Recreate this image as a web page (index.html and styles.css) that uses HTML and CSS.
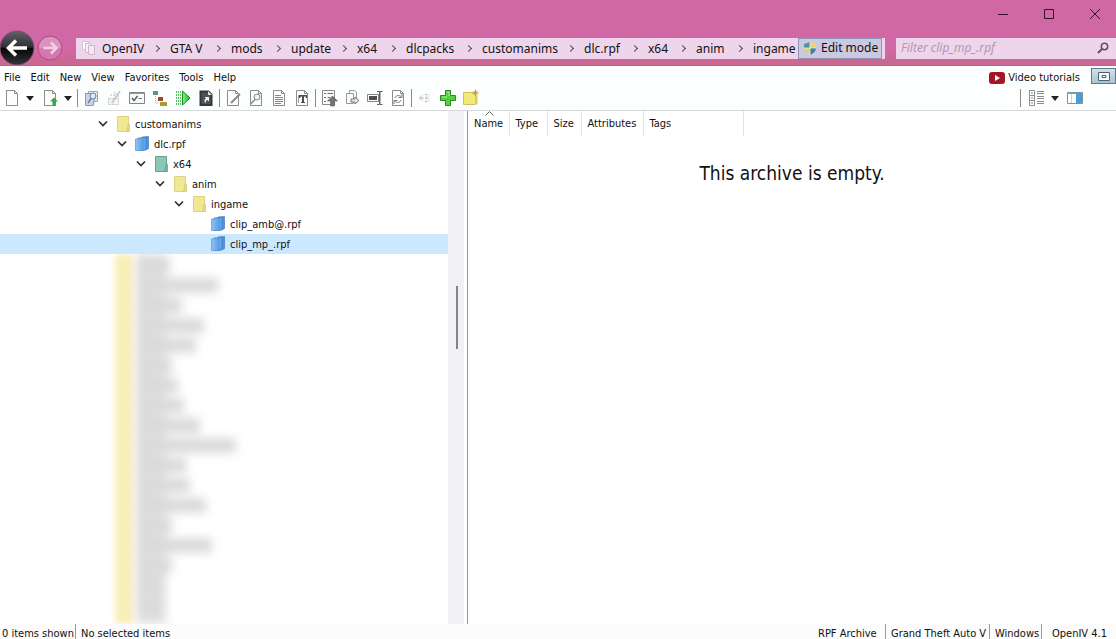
FILE: index.html
```html
<!DOCTYPE html>
<html lang="en">
<head>
<meta charset="utf-8">
<title>OpenIV</title>
<link rel="stylesheet" href="styles.css">
</head>
<body>
<svg class="defs" aria-hidden="true">
  <defs>
    <linearGradient id="gBlue" x1="0" x2="1"><stop offset="0" stop-color="#8cc4f6"/><stop offset="1" stop-color="#5a9fe8"/></linearGradient>
    <linearGradient id="gGreen" x1="0" x2="1"><stop offset="0" stop-color="#8bf08b"/><stop offset="1" stop-color="#14b428"/></linearGradient>
    <linearGradient id="gBall" x1="0" x2="0" y1="0" y2="1"><stop offset="0" stop-color="#62626a"/><stop offset=".48" stop-color="#2e2e33"/><stop offset=".5" stop-color="#050507"/><stop offset="1" stop-color="#35353a"/></linearGradient>
  </defs>
  <symbol id="page" viewBox="0 0 18 18"><path d="M3.5 1.5h8l3 3v12h-11z" fill="#fdfdfd" stroke="#8c8c8c"/><path d="M11.5 1.5v3h3" fill="none" stroke="#8c8c8c"/></symbol>
  <symbol id="caret" viewBox="0 0 8 5"><path d="M0 0h8L4 5z" fill="#222"/></symbol>
  <symbol id="folder" viewBox="0 0 16 18"><path d="M2.500 1.500h11v15h-11z" fill="#f1e893" stroke="#ddd089"/><path d="M13.500 8l1 2v6.500h-3z" fill="#e6da7c" stroke="#d3c677" stroke-width=".7"/></symbol>
  <symbol id="folder-green" viewBox="0 0 16 18"><path d="M2.500 1.500h11v15h-11z" fill="#8ac7b4" stroke="#68a292"/><path d="M13.500 8l1 2v6.500h-3z" fill="#79b7a5" stroke="#5d9787" stroke-width=".7"/></symbol>
  <symbol id="archive" viewBox="0 0 16 18"><path d="M8 2l6.500-.5v12L12 15H6z" fill="#4e93e0" stroke="#3370b8" stroke-width=".6"/><path d="M4 3l8-.5v11.500l-2 1.500H4z" fill="#62a6ee" stroke="#3977bf" stroke-width=".6"/><path d="M1.500 4l7.500-.8V15.500H1.500z" fill="url(#gBlue)" stroke="#5d94cf" stroke-width=".7"/></symbol>
  <symbol id="chev" viewBox="0 0 10 8"><path d="M1 1.500l4 4 4-4" fill="none" stroke="#303030" stroke-width="1.700"/></symbol>
</svg>
<div class="app">
  <header class="top">
    <div class="window-buttons">
      <button aria-label="Minimize"><svg width="12" height="12"><path d="M1 6.500h10" stroke="#3a1028"/></svg></button>
      <button aria-label="Maximize"><svg width="12" height="12"><path d="M1.500 1.500h9v9h-9z" fill="none" stroke="#3a1028"/></svg></button>
      <button aria-label="Close"><svg width="12" height="12"><path d="M1 1l10 10M11 1L1 11" stroke="#3a1028"/></svg></button>
    </div>
    <div class="nav">
      <button class="back" aria-label="Back"><svg width="36" height="36" viewBox="0 0 36 36"><circle cx="17" cy="18" r="17" fill="url(#gBall)" stroke="#8d4c74"/><path d="M27 18H9M16 10.500L8.500 18l7.500 7.500" fill="none" stroke="#fff" stroke-width="3.500"/></svg></button>
      <button class="forward" aria-label="Forward"><svg width="26" height="26" viewBox="0 0 26 26"><circle cx="13" cy="13" r="12" fill="#d578b0" stroke="#a94f82"/><path d="M2 13a11 11 0 0 1 22 0z" fill="#dd93bf"/><path d="M6.500 13h12M14 7.500l5.500 5.500-5.500 5.500" fill="none" stroke="#f3cfe4" stroke-width="2.500"/></svg></button>
      <nav class="address" aria-label="Path">
        <svg class="address-icon" width="16" height="16"><path d="M1.500 1.500h6v8h-6z" fill="#fff" stroke="#d9c3d8"/><path d="M4.500 3.500h5v9h-5z" fill="#f8f0f8" stroke="#d0bad0"/><path d="M7.500 5.500h6v9h-6z" fill="#f4e6f4" stroke="#cdb5cc"/></svg>
        <ol class="crumbs">
          <li><a href="#">OpenIV</a></li><li><a href="#">GTA V</a></li><li><a href="#">mods</a></li><li><a href="#">update</a></li><li><a href="#">x64</a></li><li><a href="#">dlcpacks</a></li><li><a href="#">customanims</a></li><li><a href="#">dlc.rpf</a></li><li><a href="#">x64</a></li><li><a href="#">anim</a></li><li><a href="#">ingame</a></li>
        </ol>
        <button class="edit-mode"><svg width="14" height="15" viewBox="0 0 14 15"><path d="M7 1l6 2v4H7z" fill="#e8d66a"/><path d="M7 1L1 3v4h6z" fill="#4f93b4"/><path d="M1 7h6v7C3 12 1 10 1 7z" fill="#ddd07a"/><path d="M13 7H7v7c4-2 6-4 6-7z" fill="#3f7fa6"/><path d="M7 1v13M1 7h12" stroke="#e9efe0" stroke-width=".8"/></svg>Edit mode</button>
      </nav>
      <div class="filter">
        <input type="text" aria-label="Filter" placeholder="Filter clip_mp_.rpf">
        <svg width="12" height="12"><circle cx="7.500" cy="4.500" r="3.200" fill="none" stroke="#6d4a66" stroke-width="1.500"/><path d="M5 7L1 11" stroke="#6d4a66" stroke-width="2"/></svg>
      </div>
    </div>
  </header>
  <div class="menubar">
    <nav class="menus"><button>File</button><button>Edit</button><button>New</button><button>View</button><button>Favorites</button><button>Tools</button><button>Help</button></nav>
    <a class="video" href="#"><svg width="16" height="12"><rect width="16" height="12" rx="3" fill="#a51624"/><path d="M6 3l5 3-5 3z" fill="#fff"/></svg>Video tutorials</a>
    <button class="mode-toggle" aria-label="Toggle window"><svg width="12" height="9"><path d="M.5.5h11v8H.500z" fill="#f5fafc" stroke="#4c6472"/><path d="M4 3.500h4v2H4z" fill="none" stroke="#4c6472"/></svg></button>
  </div>
  <div class="toolbar">
    <button aria-label="New"><svg width="18" height="18"><use href="#page"/></svg></button>
    <button class="drop" aria-label="New options"><svg width="8" height="5"><use href="#caret"/></svg></button>
    <button class="spaced" aria-label="Open"><svg width="18" height="18"><use href="#page"/><path d="M13 8.500l4 4h-2.500V17h-3v-4.500H9z" fill="#3aa548"/></svg></button>
    <button class="drop" aria-label="Open options"><svg width="8" height="5"><use href="#caret"/></svg></button>
    <i class="sep"></i>
    <button aria-label="View"><svg width="18" height="18"><path d="M6.500 2.500h9v10h-9z" fill="#e4eaf4" stroke="#9aa6b8"/><path d="M3.500 4.500h9l-1 12h-8z" fill="#c9d4e6" stroke="#8b98ae"/><circle cx="11" cy="7" r="3" fill="#dfe9f5" stroke="#6f80a0"/><path d="M9 9.500L6 14" stroke="#6f80a0" stroke-width="1.500"/></svg></button>
    <button aria-label="Edit" disabled><svg width="18" height="18"><path d="M3.500 9.500h10v6h-10zM5 6h6M9 3l5 4-7 5" fill="#f4f4f4" stroke="#c2c2c2" stroke-dasharray="2 1"/><path d="M15 2L7 14" stroke="#c4c4c4" stroke-width="1.500"/></svg></button>
    <button aria-label="Properties"><svg width="18" height="18"><path d="M1.500 3.500h15v11h-15z" fill="#fafafa" stroke="#7e8489"/><path d="M2 4.500h14" stroke="#90989c"/><path d="M4 9l2 2.500L9.500 7" fill="none" stroke="#4a6660" stroke-width="1.500"/><path d="M10.500 9.500H14" stroke="#777"/></svg></button>
    <button aria-label="Tree"><svg width="18" height="18"><path d="M2 2h5v4H2z" fill="#5b9585"/><path d="M7 8h5v4H7z" fill="#a3482c"/><path d="M9 13h7v4H9z" fill="#a99a36"/><path d="M4.500 7v7H8" fill="none" stroke="#aaa" stroke-dasharray="1 1"/></svg></button>
    <button aria-label="Run"><svg width="18" height="18"><path d="M2.500 2v14M4.500 2v14M6.500 2v14" stroke="#58c065" stroke-dasharray="2 1"/><path d="M8.500 2l7.500 7-7.500 7z" fill="url(#gGreen)" stroke="#169226"/></svg></button>
    <button aria-label="Shortcut"><svg width="18" height="18"><path d="M3.500 2.500h8l3 3v10.500h-11z" fill="#4b5154" stroke="#33383a" stroke-width="2"/><path d="M11 2v4h4" fill="#ddd"/><path d="M12 8H7.500l1.500 1.500c-2 1-2 3-.5 5 0-2 .5-3 2-3.500l1.500 1.500z" fill="#f2f2f2"/></svg></button>
    <i class="sep"></i>
    <button aria-label="Edit file"><svg width="18" height="18"><use href="#page"/><path d="M16 5L7 14" stroke="#8a8a8a" stroke-width="2"/></svg></button>
    <button aria-label="Preview"><svg width="18" height="18"><use href="#page"/><circle cx="10" cy="8" r="3" fill="#eef6f7" stroke="#7c898c"/><path d="M8 10.500L3.500 15" stroke="#7c898c" stroke-width="1.500"/></svg></button>
    <button aria-label="Text view"><svg width="18" height="18"><use href="#page"/><path d="M5 6.500h6M5 8.500h8M5 10.500h8M5 12.500h8M5 14.500h6" stroke="#858585"/></svg></button>
    <button aria-label="Font"><svg width="18" height="18"><use href="#page"/><path d="M6 6h8v3h-1l-.5-1.500h-1.500V13h1v1H8v-1h1V7.500H8L7 9H6z" fill="#4c4c4c"/><path d="M5.500 6v8" stroke="#999"/></svg></button>
    <i class="sep"></i>
    <button aria-label="Import"><svg width="18" height="18"><path d="M2.500 1.500h12v14h-12z" fill="#fafafa" stroke="#8a8a8a"/><path d="M4 4.500h2M4 8.500h2M4 12.500h2M7.500 4.500H13M7.500 8.500H10" stroke="#6c6c6c"/><path d="M12.500 7l5 5h-3v5h-4v-5h-3z" fill="#747474" stroke="#5b5b5b" stroke-width=".6"/></svg></button>
    <button aria-label="Export"><svg width="18" height="18"><path d="M6.500 1.500h5l2 2v8h-7z" fill="#fafafa" stroke="#999"/><path d="M3.500 4.500h7v10h-7z" fill="#fafafa" stroke="#999"/><path d="M8 10h4V8l4 3.500-4 3.500v-2H8z" fill="#e9e9e9" stroke="#777"/></svg></button>
    <button aria-label="Rename"><svg width="18" height="18"><path d="M1.500 5.500h11v7h-11z" fill="#fff" stroke="#858585"/><path d="M3 7h8v4H3z" fill="#4f4f4f"/><path d="M11 2.500h2.500v13H11M16.500 2.500H14v13h2.500" fill="none" stroke="#626262"/></svg></button>
    <button aria-label="Replace"><svg width="18" height="18"><use href="#page"/><path d="M6 9c1-3 4-3 6-1.500M13 5v3.500H9.500M12 11c-1 3-4 3-6 1.500M5 15v-3.500h3.500" fill="none" stroke="#777"/></svg></button>
    <i class="sep"></i>
    <button aria-label="Remove" disabled><svg width="18" height="18"><path d="M9 4.500h5v9H9z" fill="#f1f1f1"/><path d="M4 9h4M6 6.500L3.500 9 6 11.500M9 5.500h2M9 9h3M9 12.500h2" fill="none" stroke="#b5b5b5"/></svg></button>
    <button aria-label="Add"><svg width="18" height="18"><path d="M6.500 1.500h5v5h5v5h-5v5h-5v-5h-5v-5h5z" fill="#55cf3e" stroke="#298a24"/><path d="M8 3h2v4M3 8h5" fill="none" stroke="#a4f08e"/></svg></button>
    <button aria-label="New folder"><svg width="18" height="18"><path d="M1.500 3.500h12v12h-12z" fill="#f2e978" stroke="#d0bf60"/><path d="M13 6.500v9h2.500v-9z" fill="#ddcb5a"/><path d="M13.500.500v7M10.500 4h6M11.500 2l4 4M15.500 2l-4 4" stroke="#b99a2c"/></svg></button>
    <div class="view-tools">
      <i class="sep"></i>
      <button aria-label="View style"><svg width="18" height="18"><path d="M1.500 1.500h5v5h-5zM1.500 6.500h5v5h-5zM1.500 11.500h5v5h-5z" fill="#fff" stroke="#8d8d8d"/><path d="M3 4h2M3 9h2M3 14h2M9 2.500h7M9 4.500h7M9 7.500h7M9 9.500h7M9 12.500h7M9 14.500h7" stroke="#8b8b8b"/></svg></button>
      <button class="drop" aria-label="View options"><svg width="8" height="5"><use href="#caret"/></svg></button>
      <button aria-label="Side panel"><svg width="18" height="18"><path d="M1.500 3.500h15v11h-15z" fill="#fff" stroke="#7b94a4"/><path d="M2 4.500h14" stroke="#8aa0ae"/><path d="M10 4h6v10h-6z" fill="#4b9cd4"/><path d="M5.500 5v9" stroke="#d9d3bd"/></svg></button>
    </div>
  </div>
  <main class="content">
    <aside class="side">
      <div class="side-list">
        <ul class="tree">
          <li class="d0"><svg class="ch"><use href="#chev"/></svg><svg class="ic"><use href="#folder"/></svg><span>customanims</span></li>
          <li class="d1"><svg class="ch"><use href="#chev"/></svg><svg class="ic"><use href="#archive"/></svg><span>dlc.rpf</span></li>
          <li class="d2"><svg class="ch"><use href="#chev"/></svg><svg class="ic"><use href="#folder-green"/></svg><span>x64</span></li>
          <li class="d3"><svg class="ch"><use href="#chev"/></svg><svg class="ic"><use href="#folder"/></svg><span>anim</span></li>
          <li class="d4"><svg class="ch"><use href="#chev"/></svg><svg class="ic"><use href="#folder"/></svg><span>ingame</span></li>
          <li class="d5"><svg class="ch"></svg><svg class="ic"><use href="#archive"/></svg><span>clip_amb@.rpf</span></li>
          <li class="d5 selected"><svg class="ch"></svg><svg class="ic"><use href="#archive"/></svg><span>clip_mp_.rpf</span></li>
        </ul>
        <div class="obscured" aria-hidden="true">
          <div class="strip"></div>
          <div class="bars">
            <i style="width:34px"></i><i style="width:82px"></i><i style="width:46px"></i><i style="width:68px"></i><i style="width:60px"></i><i style="width:36px"></i><i style="width:42px"></i><i style="width:48px"></i><i style="width:64px"></i><i style="width:100px"></i><i style="width:50px"></i><i style="width:54px"></i><i style="width:70px"></i><i style="width:36px"></i><i style="width:76px"></i><i style="width:36px"></i><i style="width:28px"></i><i style="width:28px"></i>
          </div>
        </div>
      </div>
      <div class="scrollbar"><div class="thumb"></div></div>
    </aside>
    <section class="files">
      <table>
        <colgroup><col class="c-name"><col class="c-type"><col class="c-size"><col class="c-attr"><col class="c-tags"></colgroup>
        <thead><tr><th class="sorted">Name<svg width="9" height="5"><path d="M.500 4.500l4-4 4 4" fill="none" stroke="#666"/></svg></th><th>Type</th><th>Size</th><th>Attributes</th><th>Tags</th></tr></thead>
      </table>
      <p class="empty">This archive is empty.</p>
    </section>
  </main>
  <footer class="status">
    <span class="shown">0 items shown</span><span class="chosen">No selected items</span>
    <span class="kind">RPF Archive</span><span class="game">Grand Theft Auto V</span><span class="platform">Windows</span><span class="version">OpenIV 4.1</span>
  </footer>
</div>
</body>
</html>
```
FILE: styles.css
```css
* { box-sizing: border-box; }
body {
  margin: 0;
  background: #fff;
  color: #111;
  font: 11px/16px "DejaVu Sans Condensed", "Noto Sans", sans-serif;
}
button { padding: 0; border: 0; background: none; color: inherit; font: inherit; }
ul, ol { margin: 0; padding: 0; list-style: none; }
svg { display: block; flex: none; }
.defs { position: absolute; width: 0; height: 0; }
.app { display: flex; flex-direction: column; height: 100vh; overflow: hidden; }

.top { flex: none; height: 66px; background: linear-gradient(#d068a6 50px, #cb6793 60px); border-bottom: 1px solid #b9668f; }
.window-buttons { display: flex; justify-content: flex-end; height: 27px; padding-right: 5px; }
.window-buttons button { display: flex; align-items: center; justify-content: center; width: 32px; margin-left: 14px; }
.nav { display: flex; align-items: center; height: 38px; padding-top: 4px; overflow: hidden; }
.back { flex: none; margin-right: 1px; }
.forward { flex: none; margin-right: 13px; }
.address { flex: 0 1 809px; min-width: 0; display: flex; align-items: center; height: 21px; padding: 0 3px 0 5px; background: #efd5ec; font: 12px/20px "Noto Sans", sans-serif; }
.address-icon { margin-right: 5px; }
.crumbs { display: grid; flex: 1; min-width: 0; padding-top: 1px; overflow: hidden; grid-template-columns: 68px 61px 60px 66px 49px 76px 102px 64px 48px 57px 44px; }
.crumbs li { display: flex; align-items: center; justify-content: space-between; white-space: nowrap; }
.crumbs li:not(:last-child)::after { content: ""; width: 4px; height: 4px; margin-right: 11px; border: solid #62465c; border-width: 1px 1px 0 0; transform: rotate(45deg); }
a { color: inherit; text-decoration: none; }
.edit-mode { flex: none; display: flex; align-items: center; gap: 4px; width: 84px; height: 21px; padding-left: 4px; border: 1px solid #8f94b5; background: #ccc8df; }
.filter { flex: 1 1 220px; display: flex; align-items: center; height: 21px; margin-left: 11px; padding: 0 7px 0 5px; background: #efd5ec; }
.filter input { flex: 1; min-width: 0; height: 20px; padding: 0; border: 0; outline: 0; background: none; font: italic 12px/20px "Noto Sans", sans-serif; }
.filter input::placeholder { color: #b396b2; opacity: 1; }

.menubar { flex: none; display: flex; align-items: center; height: 22px; padding: 2px 0 0 4px; background: #fdfefe; }
.menus { display: flex; gap: 10px; margin-right: auto; }
.video { display: flex; align-items: center; gap: 3px; margin-right: 11px; }
.mode-toggle { display: flex; align-items: center; justify-content: center; width: 25px; height: 16px; margin-bottom: 4px; border: 1px solid #5f7a88; background: linear-gradient(#d4e2ea, #a9c2d0); }
.toolbar { flex: none; display: flex; align-items: center; height: 23px; padding-bottom: 2px; border-bottom: 1px solid #d8d8dc; background: #fdfefe; }
.toolbar button { flex: none; display: flex; align-items: center; justify-content: center; width: 23px; height: 20px; }
.toolbar .drop { width: 14px; }
.toolbar .spaced { margin-left: 1px; }
.sep { flex: none; width: 1px; height: 18px; margin: 0 1px 0 2px; background: #8c8c8c; }
.view-tools { display: flex; align-items: center; margin-left: auto; padding-right: 30px; }
.view-tools .sep { margin-right: 4px; }
.view-tools .drop { margin-right: 1px; }

.content { flex: 1; min-height: 0; display: flex; }
.side { flex: 0 0 468px; display: flex; border-right: 1px solid #989898; }
.side-list { flex: 1; min-width: 0; display: flex; flex-direction: column; padding-top: 3px; overflow: hidden; }
.tree { flex: none; }
.tree li { display: flex; align-items: center; height: 20px; line-height: 18px; }
.tree span { padding-top: 2px; }
.ch { width: 10px; height: 8px; margin-right: 7px; }
.ic { width: 16px; height: 18px; margin-right: 4px; }
.d0 { padding-left: 98px; }
.d1 { padding-left: 117px; }
.d2 { padding-left: 136px; }
.d3 { padding-left: 155px; }
.d4 { padding-left: 174px; }
.d5 { padding-left: 193px; }
.selected { background: #cce8ff; }
.obscured { flex: 1; min-height: 0; display: flex; gap: 3px; padding-left: 115px; overflow: hidden; }
.strip { width: 18px; background: #f9efb6; filter: blur(3px); }
.bars { padding-top: 4px; background: linear-gradient(#e0e0e0, #e0e0e0) 0 0 / 30px 100% no-repeat; filter: blur(5px); }
.bars i { display: block; height: 15px; margin-bottom: 5px; background: #dadada; }
.scrollbar { width: 16px; margin-right: 3px; padding: 175px 6px 0 8px; background: #f1f1f3; }
.thumb { height: 63px; background: #858585; }

.files { flex: 1; min-width: 0; }
table { width: 275px; table-layout: fixed; border-collapse: collapse; }
.c-name { width: 41px; }
.c-type { width: 38px; }
.c-size { width: 34px; }
.c-attr { width: 62px; }
.c-tags { width: 100px; }
th { height: 25px; padding: 1px 0 0 6px; border-right: 1px solid #e2e2ea; font-weight: 400; text-align: left; white-space: nowrap; }
.sorted { position: relative; }
.sorted svg { position: absolute; top: 0; left: 17px; }
.empty { margin: 24px 0 0; font-size: 19px; line-height: 26px; text-align: center; }

.status { flex: none; display: flex; height: 15px; padding-left: 2px; line-height: 20px; white-space: nowrap; background: #fcfcfc; }
.status span + span { border-left: 1px solid #9a9a9a; padding-left: 5px; }
.shown { width: 73px; }
.chosen { flex: 1; }
.status .kind { width: 67px; padding: 0; border: 0; }
.game { width: 104px; }
.platform { width: 52px; }
.status .version { width: 75px; padding-left: 10px; }
```
